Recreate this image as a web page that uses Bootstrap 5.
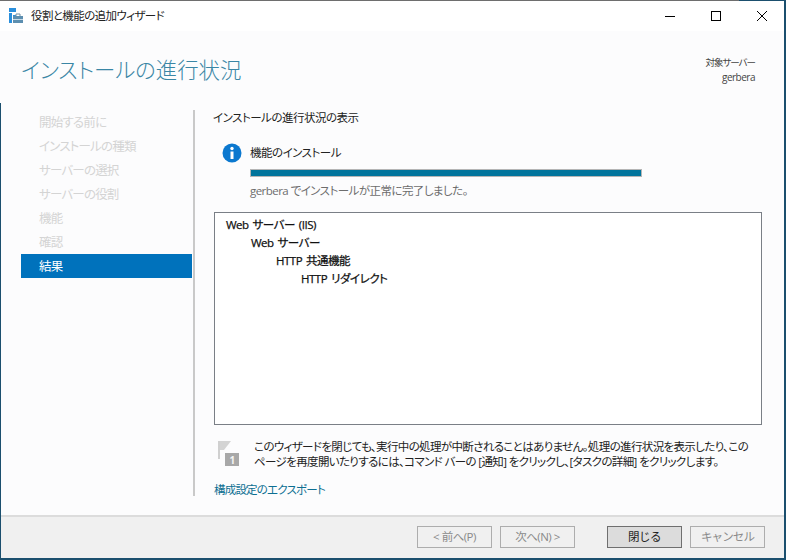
<!DOCTYPE html>
<html lang="ja">
<head>
<meta charset="utf-8">
<title>役割と機能の追加ウィザード</title>
<link href="https://cdn.jsdelivr.net/npm/bootstrap@5.3.0/dist/css/bootstrap.min.css" rel="stylesheet">
<style>
html,body{width:786px;height:560px;overflow:hidden;margin:0}
body{font-family:"Open Sans","Noto Sans CJK JP",sans-serif;font-size:11.5px;letter-spacing:-.5px;line-height:18px;color:#222;background:#fcfcfd;font-feature-settings:"palt"}
.wiz{width:786px;height:560px;border:solid #1b4f6e;border-width:0 2px 2px 1px}
.topline{height:1px;margin:0 -2px 0 -1px;background:linear-gradient(to right,#6e6e6e 739px,#1b4f6e 739px)}
.tbar{height:30px;background:#fff;padding-left:8px;margin-left:-1px}
.tbar-title{margin-left:7px;color:#222;letter-spacing:-.6px}
.winbtn{width:46px;height:30px}
.winbtn svg{margin-left:2px}
.head{height:72px;background:#fcfcfd;padding:0 29px 0 21px;margin-left:-1px}
.head-title{font-size:21.4px;letter-spacing:0;font-weight:300;line-height:30px;color:#3a86a5;margin-top:24px}
.head-target{font-size:10px;line-height:14px;color:#444;margin-top:24px}
.tgt-label{font-size:9.5px;letter-spacing:-1px}
.main{height:413px;padding-top:7px}
.side{width:171px;margin-left:20px;list-style:none;padding:0}
.side li{height:24px;line-height:26px;padding-left:18px;color:#d4d4d4;font-size:12.5px;letter-spacing:-.8px}
.side li.on{background:#0072bc;color:#fff}
.rule{width:2px;background:#c9c9c9;margin-left:1px;height:386px}
.cont{padding-left:18px;width:567px}
.cont-h{height:16px;line-height:16px;margin-bottom:17px}
.ic-i{width:20px;height:20px;margin:0 8px 0 9px}
.prog-line{height:8px;width:392px;margin:6px 0 0 37px;background:#00749c;border:1px solid #b5b5b5}
.status{margin:5px 0 0 37px;color:#6d6d6d;letter-spacing:-.55px}
.logbox{height:213px;width:548px;margin:12px 0 0 1px;background:#fff;border:1px solid #7a7f86;padding:3px 11px;color:#111;-webkit-text-stroke:.25px #111;word-spacing:1.5px}
.lv1{padding-left:25px}.lv2{padding-left:50px}.lv3{padding-left:75px}
.note{margin:14px 0 0 2px;line-height:15.500px;color:#222}
.note-ic{width:39px;flex:none}
.note-t{width:505px;letter-spacing:-.63px}
.exp{color:#0d6f92;text-decoration:none;display:block;margin:11px 0 0 1px;letter-spacing:-.8px}
.foot{height:43px;background:#f0f0f0;border-top:2px solid #dcdcdc;padding:9px 19px 0 0}
.wbtn{width:75px;height:22px;padding:0;border-radius:0;font-size:11.5px;letter-spacing:-.5px;line-height:18px;border:1px solid #adadad;background:#f0f0f0;color:#8a8a8a;opacity:1}
.wbtn.pri{border:1px solid #6f6f6f;background:#dcdcdc;color:#222}
.wbtn-lg{margin-left:24px}
.wbtn-cancel{letter-spacing:-.9px}
</style>
</head>
<body>
<div class="wiz d-flex flex-column">
  <div class="topline"></div>
  <div class="tbar d-flex align-items-center">
    <svg width="16" height="16" viewBox="0 0 16 16"><rect x="1" y="0" width="7" height="4" fill="#2a8fdc"/><rect x="1" y="5" width="3" height="10" fill="#2a8fdc"/><rect x="5" y="7" width="3" height="1.5" fill="#2a8fdc"/><rect x="5" y="8" width="10" height="7" fill="#5d8fb0"/><path d="M8 8V6h4v2" fill="none" stroke="#6f8fa5"/><rect x="5" y="11" width="10" height="1" fill="#c8dbe8"/></svg>
    <span class="tbar-title">役割と機能の追加ウィザード</span>
    <div class="ms-auto d-flex">
      <div class="winbtn d-flex align-items-center justify-content-center"><svg width="10" height="10"><path d="M0 5.5h10" stroke="#000"/></svg></div>
      <div class="winbtn d-flex align-items-center justify-content-center"><svg width="10" height="10"><rect x=".5" y=".5" width="9" height="9" fill="none" stroke="#000"/></svg></div>
      <div class="winbtn d-flex align-items-center justify-content-center"><svg width="10" height="10"><path d="M0 0l10 10M10 0L0 10" stroke="#000" stroke-width="1"/></svg></div>
    </div>
  </div>
  <div class="head d-flex justify-content-between">
    <div class="head-title">インストールの進行状況</div>
    <div class="head-target text-end"><span class="tgt-label">対象サーバー</span><br>gerbera</div>
  </div>
  <div class="main d-flex">
    <ul class="side mb-0">
      <li>開始する前に</li>
      <li>インストールの種類</li>
      <li>サーバーの選択</li>
      <li>サーバーの役割</li>
      <li>機能</li>
      <li>確認</li>
      <li class="on">結果</li>
    </ul>
    <div class="rule"></div>
    <div class="cont">
      <div class="cont-h">インストールの進行状況の表示</div>
      <div class="d-flex align-items-center">
        <svg class="ic-i" viewBox="0 0 20 20"><circle cx="10" cy="10" r="9.5" fill="#0b78cf"/><circle cx="10" cy="5.5" r="1.7" fill="#fff"/><rect x="8.5" y="8.5" width="3" height="7.5" fill="#fff"/></svg>
        <span>機能のインストール</span>
      </div>
      <div class="prog-line"></div>
      <div class="status">gerbera でインストールが正常に完了しました。</div>
      <div class="logbox">
        <div>Web サーバー (IIS)</div>
        <div class="lv1">Web サーバー</div>
        <div class="lv2">HTTP 共通機能</div>
        <div class="lv3">HTTP リダイレクト</div>
      </div>
      <div class="note d-flex">
        <div class="note-ic">
          <svg width="27" height="28" viewBox="0 0 27 28"><path d="M4 2v18" stroke="#d0d0d0" stroke-width="2"/><path d="M5 2h11L9 11H5z" fill="#d4d4d4"/><rect x="10" y="14" width="14" height="13" fill="#a8a8a8"/><text x="17" y="25" font-size="10" font-weight="700" text-anchor="middle" fill="#f4f4f4">1</text></svg>
        </div>
        <div class="note-t">このウィザードを閉じても、実行中の処理が中断されることはありません。処理の進行状況を表示したり、この<br>ページを再度開いたりするには、コマンド バーの [通知] をクリックし、[タスクの詳細] をクリックします。</div>
      </div>
      <a class="exp" href="#">構成設定のエクスポート</a>
    </div>
  </div>
  <div class="foot d-flex justify-content-end gap-2">
    <button class="btn wbtn" type="button">&lt; 前へ(P)</button>
    <button class="btn wbtn" type="button">次へ(N) &gt;</button>
    <button class="btn wbtn pri wbtn-lg" type="button">閉じる</button>
    <button class="btn wbtn wbtn-cancel" type="button">キャンセル</button>
  </div>
</div>
</body>
</html>
